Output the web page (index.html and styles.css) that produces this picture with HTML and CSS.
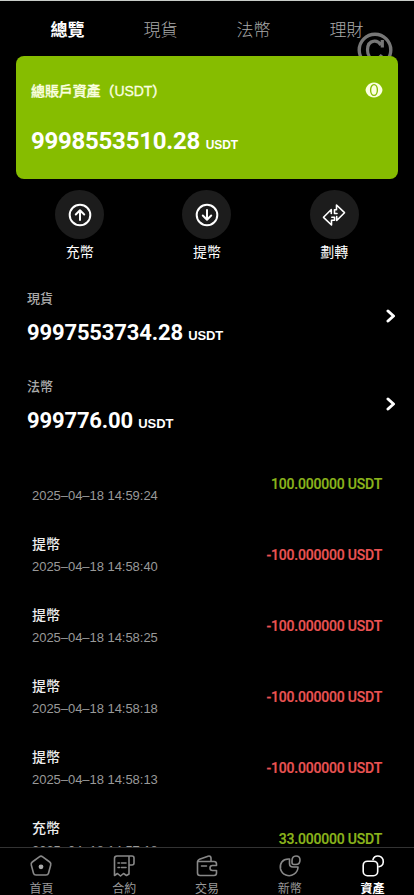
FILE: index.html
```html
<!DOCTYPE html>
<html lang="zh-Hant">
<head>
<meta charset="utf-8">
<meta name="viewport" content="width=device-width, initial-scale=1">
<title>資產</title>
<link rel="stylesheet" href="styles.css">
</head>
<body>
<div class="app">
  <nav class="tabs">
    <a class="tab active">總覽</a><a class="tab">現貨</a><a class="tab">法幣</a><a class="tab">理財</a>
  </nav>
  <section class="summary">
    <svg class="coin" viewBox="0 0 36 36"><circle cx="18" cy="18" r="15.8" fill="none" stroke="#777" stroke-width="3.4"/><path d="M25.300 8V15.500M24 13C22 10 19.500 8.800 17 9.200C12.500 9.800 10.500 13 10.500 18S13 27 18 27Q22 27 25 23" fill="none" stroke="#777" stroke-width="3.200"/></svg>
    <div class="card">
      <div class="card-head">
        <span class="card-title">總賬戶資產（USDT）</span>
        <svg class="eye" viewBox="0 0 18 16"><path d="M5 1.500Q9-.5 13 1.500Q17 4 17.500 8Q17 12 13 14.500Q9 16.500 5 14.500Q1 12 .5 8Q1 4 5 1.500Z" fill="#fbffe0"/><ellipse cx="9" cy="8" rx="3.400" ry="5.400" fill="none" stroke="#86bd00" stroke-width="1.400"/></svg>
      </div>
      <div class="total">9998553510.28 <small>USDT</small></div>
    </div>
  </section>
  <section class="actions">
    <div class="action"><span class="disc"><svg viewBox="0 0 24 24"><circle cx="12" cy="12" r="10.300"/><path d="M12 17V7.500M7.800 11.500L12 7.300l4.200 4.200"/></svg></span>充幣</div>
    <div class="action"><span class="disc"><svg viewBox="0 0 24 24"><circle cx="12" cy="12" r="10.300"/><path d="M12 7v9.500M7.800 12.500l4.200 4.200 4.200-4.200"/></svg></span>提幣</div>
    <div class="action"><span class="disc"><svg class="swap" viewBox="0 0 24 24"><path d="M9.300 10.500V6.500L1.500 14.300L9.500 22V17.300H12.500V14.300H9.800M14.700 13.500V17.500L22.500 9.700L14.500 2V6.700H12.500V10.500H15"/></svg></span>劃轉</div>
  </section>
  <section class="accounts">
    <div class="account"><div><div class="name">現貨</div><div class="value">9997553734.28 <small>USDT</small></div></div><svg class="chevron" viewBox="0 0 10 14"><path d="M2 2l5.500 5L2 12"/></svg></div>
    <div class="account"><div><div class="name">法幣</div><div class="value">999776.00 <small>USDT</small></div></div><svg class="chevron" viewBox="0 0 10 14"><path d="M2 2l5.500 5L2 12"/></svg></div>
  </section>
  <section class="history">
    <div class="record"><div><div class="kind"></div><time>2025–04–18 14:59:24</time></div><span class="amount in">100.000000 USDT</span></div>
    <div class="record"><div><div class="kind">提幣</div><time>2025–04–18 14:58:40</time></div><span class="amount">-100.000000 USDT</span></div>
    <div class="record"><div><div class="kind">提幣</div><time>2025–04–18 14:58:25</time></div><span class="amount">-100.000000 USDT</span></div>
    <div class="record"><div><div class="kind">提幣</div><time>2025–04–18 14:58:18</time></div><span class="amount">-100.000000 USDT</span></div>
    <div class="record"><div><div class="kind">提幣</div><time>2025–04–18 14:58:13</time></div><span class="amount">-100.000000 USDT</span></div>
    <div class="record"><div><div class="kind">充幣</div><time>2025–04–18 14:57:18</time></div><span class="amount in">33.000000 USDT</span></div>
  </section>
  <nav class="bottom">
    <a><svg viewBox="0 0 24 24"><path d="M10.300 2.800Q12 1.500 13.700 2.800L20.700 8Q22.300 9.200 21.700 11L19.500 19.200Q19 21 17 21H7Q5 21 4.500 19.200L2.300 11Q1.700 9.200 3.300 8Z"/><circle cx="12" cy="12.800" r="2.400" class="dot"/></svg>首頁</a>
    <a><svg viewBox="0 0 24 24"><path d="M17 2H5Q2.500 2 2.500 4.500V21.500L5.500 19.500L8.500 22L11.500 19.500L14.500 21.500L17 20V2H20Q22 2 22 4V9Q22 11 20 11H17M6 9h1.500M9.500 9h4.500M6 13.500h1.500M9.500 13.500h4.500"/></svg>合約</a>
    <a><svg viewBox="0 0 24 24"><path d="M2.500 7.500H19Q21.500 7.500 21.500 10V11.500H17.500Q15 11.500 15 14T17.500 16.500H21.500V19Q21.500 21.500 19 21.500H5Q2.500 21.500 2.500 19V8Q2.500 6 4.500 5.200L13 2.200Q15.500 1.500 16 4V7.500M6.500 12h5"/></svg>交易</a>
    <a><svg viewBox="0 0 24 24"><path d="M11.500 5C4 4.500 1.500 10 2.500 15C4 21 11 23.500 16 20.200Q20 17.500 20 13H15Q11.500 13 11.500 9.500Z"/><path d="M14 7Q14 2 18 2Q22 2 22 6Q22 10.500 18 10.500H16Q14 10.500 14 8.500Z"/></svg>新幣</a>
    <a class="active"><svg viewBox="0 0 24 24"><rect x="2.200" y="7.200" width="14.500" height="14.500" rx="4.200"/><path d="M12 5.500C13.500.7 20 1 22 5.500Q23.500 11.500 18 12.800"/></svg>資產</a>
  </nav>
</div>
</body>
</html>
```
FILE: styles.css
```css
* { box-sizing: border-box; }
body { margin: 0; background: #000; color: #fff; font-family: "Liberation Sans", "Noto Sans CJK TC", sans-serif; }
.app { height: 895px; overflow: hidden; display: flex; flex-direction: column; border-top: 1px solid #c8ccc8; }
.tabs { display: flex; height: 55px; padding: 0 21px; flex: none; }
.tab { flex: 1; text-align: center; font-size: 17px; line-height: 59px; color: #aaa; font-weight: 300; }
.tab.active { color: #fff; font-weight: 700; }
.summary { position: relative; padding: 0 16px; flex: none; }
.coin { position: absolute; right: 21px; top: -24px; width: 36px; height: 36px; }
.card { position: relative; height: 123px; background: #86bd00; border-radius: 8px; padding: 23px 15px 0; color: #fbffe0; }
.card-head { display: flex; justify-content: space-between; align-items: center; height: 22px; }
.card-title { font-size: 14px; font-weight: 500; -webkit-text-stroke: .3px; letter-spacing: -.1px; white-space: nowrap; }
.eye { width: 18px; height: 16px; }
.total { margin-top: 25px; font: 700 24px/30px Roboto, sans-serif; letter-spacing: -.25px; color: #fff; }
small { font: 700 13px "Liberation Sans", sans-serif; letter-spacing: -.3px; }
.total small { font-size: 12px; letter-spacing: -.1px; }
.actions { display: flex; padding: 11px 16px 0; height: 95px; flex: none; }
.action { flex: 1; display: flex; flex-direction: column; align-items: center; font-size: 14px; line-height: 27px; }
.disc { width: 49px; height: 49px; border-radius: 50%; background: #1c1c1c; display: grid; place-items: center; }
.disc svg { width: 24px; height: 24px; fill: none; stroke: #fff; stroke-width: 2; stroke-linecap: round; stroke-linejoin: round; }
.disc .swap { stroke-width: 1.6; }
.accounts { padding: 12px 18px 0 27px; flex: none; }
.account { height: 88px; display: flex; justify-content: space-between; }
.name { font-size: 13px; line-height: 26px; color: #aaa; font-weight: 500; }
.value { font: 700 22px/30px Roboto, sans-serif; letter-spacing: -.15px; margin-top: 6px; }
.value small { letter-spacing: -.1px; }
.chevron { width: 10px; height: 14px; margin-top: 23px; fill: none; stroke: #fff; stroke-width: 3; stroke-linecap: round; stroke-linejoin: round; }
.history { flex: 1; min-height: 0; overflow: hidden; padding: 0 32px; margin-top: -14px; }
.record { height: 71px; display: flex; justify-content: space-between; align-items: center; }
.kind { height: 23px; line-height: 25px; font-size: 14px; font-weight: 500; color: #eee; }
time { display: block; height: 23px; line-height: 23px; font-size: 13px; letter-spacing: -.04px; color: #999; }
.amount { font: 500 14px Roboto, sans-serif; -webkit-text-stroke: .2px; color: #eb5454; letter-spacing: -.2px; }
.amount.in { color: #8bb51c; }
.bottom { display: flex; height: 48px; border-top: 1px solid #333; flex: none; background: #000; }
.bottom a { flex: 1; display: flex; flex-direction: column; align-items: center; padding-top: 6px; font-size: 12px; line-height: 23px; color: #999; }
.bottom svg { width: 24px; height: 24px; flex: none; fill: none; stroke: #888; stroke-width: 1.6; stroke-linecap: round; stroke-linejoin: round; }
.bottom .dot { fill: #aaa; stroke: none; }
.bottom .active { color: #fff; font-weight: 700; }
.bottom .active svg { stroke: #fff; }
```
